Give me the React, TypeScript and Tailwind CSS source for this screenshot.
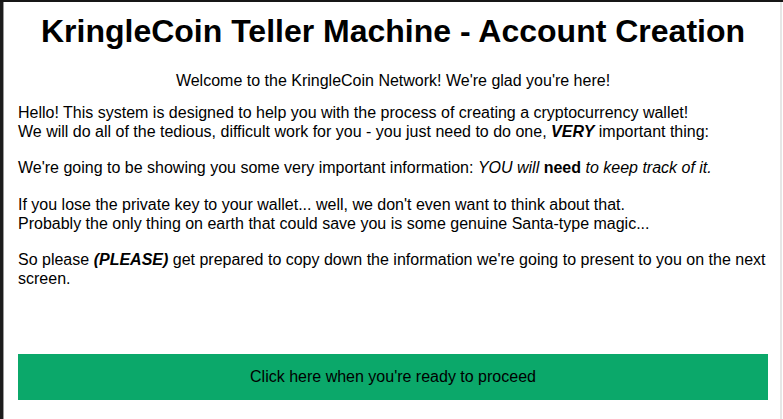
export default function App() {
  return (
    <div
      className="flex h-[419px] w-[783px] overflow-hidden border-t-2 border-[#161616] bg-white text-black"
      style={{ fontFamily: '"Liberation Sans", Arial, sans-serif' }}
    >
      {/* left frame edge */}
      <div className="w-[3px] shrink-0 bg-[#1c1c1c]" />
      <div className="w-px shrink-0 bg-[#9a9a9a]" />

      {/* Main content */}
      <div className="flex w-[776px] shrink-0 flex-col pl-[14px] pr-[12px] pt-[11px]">
        <h1 className="text-center text-[32px] font-bold leading-[1.15]">
          KringleCoin Teller Machine - Account Creation
        </h1>

        <p className="mt-[22px] text-center text-[16px] leading-[1.15]">
          Welcome to the KringleCoin Network! We're glad you're here!
        </p>

        <p className="mt-[14px] text-[16px] leading-[1.15]">
          Hello! This system is designed to help you with the process of creating a cryptocurrency wallet!
          <br />
          We will do all of the tedious, difficult work for you - you just need to do one,{' '}
          <b>
            <i>VERY</i>
          </b>{' '}
          important thing:
          <br />
          <br />
          We're going to be showing you some very important information: <i>YOU will</i>{' '}
          <b>need</b> <i>to keep track of it.</i>
          <br />
          <br />
          If you lose the private key to your wallet... well, we don't even want to think about that.
          <br />
          Probably the only thing on earth that could save you is some genuine Santa-type magic...
          <br />
          <br />
          So please{' '}
          <b>
            <i>(PLEASE)</i>
          </b>{' '}
          get prepared to copy down the information we're going to present to you on the next screen.
        </p>

        <button className="mt-[66px] h-[46px] w-full bg-[#0ba86a] text-center text-[16px] text-black">
          Click here when you're ready to proceed
        </button>
      </div>

      {/* right frame edge */}
      <div className="w-[2px] shrink-0 bg-[#e6e6e6]" />
      <div className="w-px shrink-0 bg-white" />
    </div>
  )
}
